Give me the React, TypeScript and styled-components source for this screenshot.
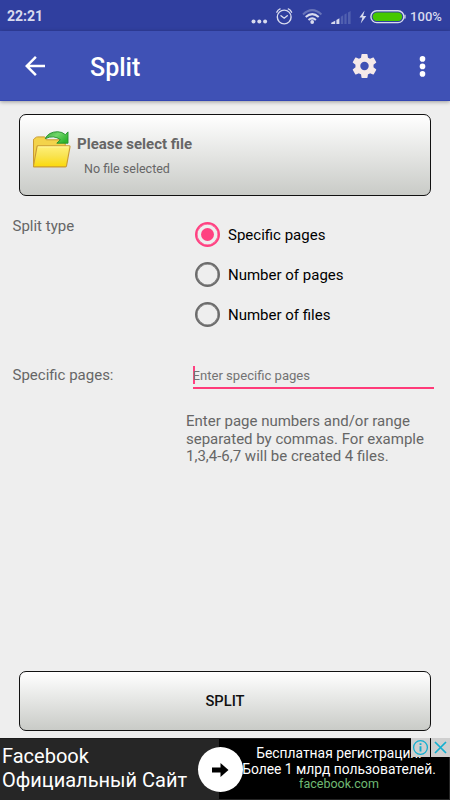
import React, { useState } from "react";
import styled, { createGlobalStyle } from "styled-components";

const GlobalStyle = createGlobalStyle`
  * { box-sizing: border-box; }
  body { margin: 0; background: #eeeeee; font-family: Roboto, "Noto Sans", sans-serif; }
  button, input { font: inherit; }
`;

const Screen = styled.div`
  width: 450px;
  height: 800px;
  display: flex;
  flex-direction: column;
  overflow: hidden;
  background: #eeeeee;
  color: #666666;
`;

const StatusBar = styled.div`
  flex: none;
  height: 31px;
  display: flex;
  align-items: center;
  justify-content: space-between;
  padding: 1px 8px 0 7px;
  background: #303f9f;
  color: #d8dbee;
`;

const Clock = styled.span`
  font-size: 14px;
  font-weight: 700;
  line-height: 20px;
`;

const StatusIcons = styled.div`
  display: flex;
  align-items: center;
`;

const StatusGlyphs = styled.svg`
  display: block;
  margin: 0 4px 1px 0;
`;

const Percent = styled.span`
  font-size: 13px;
  font-weight: 500;
  letter-spacing: 0.05px;
`;

const Toolbar = styled.header`
  flex: none;
  height: 70px;
  display: flex;
  align-items: center;
  padding: 0 13px 0 20px;
  background: #3f51b5;
  border-bottom: 1px solid #3346b2;
  box-shadow: 0 1px 4px rgba(0, 0, 0, 0.35);
  color: #ffffff;
`;

const Title = styled.h1`
  flex: 1;
  margin: 5px 0 0 40px;
  font-size: 25px;
  font-weight: 500;
  line-height: 30px;
`;

const IconButton = styled.button<{ $gap?: number }>`
  display: flex;
  padding: 0;
  margin: 0 0 0 ${(p) => p.$gap ?? 0}px;
  border: 0;
  background: none;
`;

const Content = styled.main`
  flex: 1;
  display: flex;
  flex-direction: column;
  padding: 13px 17px 7px 12px;
`;

const GradientButton = styled.button<{ $height: number }>`
  flex: none;
  width: 412px;
  height: ${(p) => p.$height}px;
  margin: 0 0 0 7px;
  padding: 0;
  border: 1px solid #111111;
  border-radius: 7px;
  background: linear-gradient(#ffffff, #c9cbc7);
`;

const FileButton = styled(GradientButton)`
  display: flex;
  align-items: flex-start;
  padding: 16px 0 0 11px;
  text-align: left;
  color: #666666;
`;

const FileText = styled.span`
  display: flex;
  flex-direction: column;
  margin: 3px 0 0 4px;
`;

const FileTitle = styled.span`
  font-size: 15px;
  font-weight: 700;
  line-height: 20px;
`;

const FileName = styled.span`
  margin: 6px 0 0 7px;
  font-size: 12.5px;
  line-height: 18px;
`;

const SplitButton = styled(GradientButton)`
  margin-top: auto;
  color: #111111;
  font-size: 14.7px;
  font-weight: 500;
`;

const FormRow = styled.section<{ $top: number }>`
  display: grid;
  grid-template-columns: 173.5px 1fr;
  margin-top: ${(p) => p.$top}px;
`;

const Label = styled.span<{ $drop?: number }>`
  padding: ${(p) => p.$drop ?? 0}px 0 0 0.5px;
  font-size: 15px;
  line-height: 20px;
`;

const RadioGroup = styled.div`
  display: flex;
  flex-direction: column;
  padding: 0 0 0 9.5px;
`;

const RadioOption = styled.button`
  display: flex;
  align-items: center;
  gap: 8px;
  height: 40px;
  padding: 0;
  border: 0;
  background: none;
  color: #000000;
  font-size: 15px;
`;

const RadioMark = styled.span<{ $on: boolean }>`
  display: flex;
  align-items: center;
  justify-content: center;
  width: 25px;
  height: 25px;
  margin-bottom: 1px;
  border: 2px solid ${(p) => (p.$on ? "#ff4081" : "#6b6b6b")};
  box-shadow: inset 0 0 0 0.5px ${(p) => (p.$on ? "#ff4081" : "#6b6b6b")};
  border-radius: 50%;

  &::after {
    content: "";
    width: 13px;
    height: 13px;
    border-radius: 50%;
    background: ${(p) => (p.$on ? "#ff4081" : "transparent")};
  }
`;

const Field = styled.div`
  width: 241px;
  height: 24px;
  margin: 0 0 0 7px;
  display: flex;
  align-items: flex-start;
  border-bottom: 2px solid #ff3a79;
`;

const Caret = styled.span`
  width: 2px;
  height: 18px;
  margin: 1px -2px 0 0;
  background: #ff4081;
`;

const FieldInput = styled.input`
  flex: 1;
  width: 100%;
  height: 20px;
  padding: 0;
  border: 0;
  outline: 0;
  background: none;
  color: #333333;
  font-size: 13.1px;

  &::placeholder { color: #737373; opacity: 1; }
`;

const Hint = styled.p`
  width: 250px;
  margin: 24px 0 0;
  padding-left: 0.5px;
  font-size: 15px;
  line-height: 17.5px;
  white-space: pre-line;
`;

const AdBanner = styled.aside`
  flex: none;
  position: relative;
  height: 62px;
  display: grid;
  grid-template-columns: 219px 230px 1px;
  border-top: 1px solid #1c1c1c;
  background: #262626;
  color: #ffffff;
`;

const AdHeadline = styled.div`
  padding: 6px 0 0 2px;
  font-size: 20px;
  line-height: 23.5px;
  white-space: pre-line;
`;

const AdBody = styled.div`
  display: flex;
  flex-direction: column;
  align-items: center;
  margin-bottom: 1px;
  padding: 6px 0 0 10px;
  background: #000000;
  font-size: 13.85px;
  line-height: 16px;
  white-space: nowrap;
`;

const AdLink = styled.span`
  color: #6fb973;
  font-size: 12.5px;
  line-height: 14px;
`;

const AdArrow = styled.span`
  position: absolute;
  top: 8px;
  left: 198px;
  width: 45px;
  height: 45px;
  display: flex;
  align-items: center;
  justify-content: center;
  border-radius: 50%;
  background: #ffffff;
`;

const AdControls = styled.div`
  position: absolute;
  top: -1px;
  right: 0;
  display: flex;
  gap: 1px;
`;

const AdControl = styled.button`
  width: 19px;
  height: 19px;
  display: flex;
  align-items: center;
  justify-content: center;
  padding: 0;
  border: 0;
  background: #cfcfcf;
`;

const StatusDrawing = () => (
  <StatusGlyphs width="156" height="20" viewBox="0 0 156 20" fill="none">
    <g fill="#d8dbee">
      <circle cx="3.5" cy="15.5" r="2" />
      <circle cx="9.3" cy="15.5" r="2" />
      <circle cx="15.1" cy="15.5" r="2" />
    </g>
    <g stroke="#d8dbee" strokeWidth="1.4" strokeLinecap="round">
      <circle cx="34.2" cy="11" r="6.9" />
      <path d="M31 9.7l3.2 2.5 3.1-2.5M26.8 6.2q1-2.5 3.3-3.3M41.6 6.2q-1-2.5-3.3-3.3" />
    </g>
    <path d="M53 8.4q9.2-8.6 18.4 0" stroke="#6874b9" strokeWidth="2" />
    <path d="M55.7 11q6.5-5.8 13 0M58.5 14q3.7-3.2 7.4 0" stroke="#d8dbee" strokeWidth="2" />
    <circle cx="62.2" cy="16" r="1.9" fill="#d8dbee" />
    <path d="M81.2 18v-1.2l4-2V18zM86.4 18v-4l3-1.8V18z" fill="#d8dbee" />
    <path d="M90.8 18v-7.3l2.4-1.5V18zM94.4 18V8.5l2.2-1.3V18zM98 18V6.4l2.6-1.5V18z" fill="#5160b0" />
    <path d="M114.6 4.5l-5.2 7h3l-1.7 6 5.6-7.6h-3.2z" fill="#d8dbee" />
    <rect x="120.9" y="4.8" width="33" height="11.8" rx="5.9" stroke="#d8dbee" strokeWidth="1.4" />
    <rect x="122.6" y="6.5" width="29.6" height="8.4" rx="4.2" fill="#46c800" />
    <path d="M155 8.8v3.8" stroke="#d8dbee" strokeWidth="1.2" />
  </StatusGlyphs>
);

const BackIcon = () => (
  <svg width="30" height="30" viewBox="0 0 24 24" fill="#ffffff">
    <path d="M20 11H7.83l5.59-5.59L12 4l-8 8 8 8 1.41-1.41L7.83 13H20v-2z" />
  </svg>
);

const GearIcon = () => (
  <svg width="29" height="30" viewBox="0 0 24 24" fill="#f5e9e9">
    <path d="M19.43 12.98c.04-.32.07-.64.07-.98s-.03-.66-.07-.98l2.11-1.65c.19-.15.24-.42.12-.64l-2-3.46c-.12-.22-.39-.3-.61-.22l-2.49 1c-.52-.4-1.08-.73-1.69-.98l-.38-2.65A.49.49 0 0 0 14 2h-4c-.25 0-.46.18-.49.42l-.38 2.65c-.61.25-1.17.59-1.69.98l-2.49-1c-.23-.09-.49 0-.61.22l-2 3.46c-.13.22-.07.49.12.64l2.11 1.65c-.04.32-.07.65-.07.98s.03.66.07.98l-2.11 1.65c-.19.15-.24.42-.12.64l2 3.46c.12.22.39.3.61.22l2.49-1c.52.4 1.08.73 1.69.98l.38 2.65c.03.24.24.42.49.42h4c.25 0 .46-.18.49-.42l.38-2.65c.61-.25 1.17-.59 1.69-.98l2.49 1c.23.09.49 0 .61-.22l2-3.46c.12-.22.07-.49-.12-.64l-2.11-1.65zM12 15.5a3.5 3.5 0 1 1 0-7 3.5 3.5 0 0 1 0 7z" />
  </svg>
);

const MoreIcon = () => (
  <svg width="28" height="30" viewBox="0 0 28 30" fill="#ffffff">
    <circle cx="13.5" cy="7.9" r="2.8" />
    <circle cx="13.5" cy="15.4" r="2.8" />
    <circle cx="13.5" cy="22.9" r="2.8" />
  </svg>
);

const FolderIcon = () => (
  <svg width="42" height="42" viewBox="0 0 42 42">
    <defs>
      <linearGradient id="front" x1="0" y1="0" x2="0" y2="1">
        <stop offset="0" stopColor="#fff07a" />
        <stop offset="0.45" stopColor="#f9e454" />
        <stop offset="1" stopColor="#fbd909" />
      </linearGradient>
      <linearGradient id="arrow" x1="0" y1="0" x2="1" y2="0.6">
        <stop offset="0" stopColor="#35a836" />
        <stop offset="0.5" stopColor="#72d66b" />
        <stop offset="1" stopColor="#2fb52f" />
      </linearGradient>
    </defs>
    <path d="M2.5 35.2V9.1q0-1.1.9-1.6l1.6-1q.5-.6 1.4-.6h6.8q1 0 1.4.9l.7 2H33q1.2 0 1.2 1.2V35H3.8z" fill="#f3d34b" stroke="#c99b31" strokeWidth="1" />
    <path d="M14.3 7.6Q17.4.9 26.6.7q4.6.1 7.8 3L37 .9v11.3H25.8l3.6-3.5q-6.6-5.1-15.1-1.1z" fill="url(#arrow)" stroke="#218e2b" strokeWidth="0.9" strokeLinejoin="round" />
    <path d="M6 15.6q.1-.8.9-.8h31.3q1 0 .8 1l-3.5 19.1q-.2 1-1.1 1H3.3q-1 0-.8-1.1z" fill="url(#front)" stroke="#ca9a35" strokeWidth="1.1" />
    <path d="M7.1 16h30.5" stroke="#fff5a3" strokeWidth="0.8" />
  </svg>
);

const SPLIT_TYPES = ["Specific pages", "Number of pages", "Number of files"];

export default function App() {
  const [splitType, setSplitType] = useState(0);
  const [pages, setPages] = useState("");

  return (
    <>
      <GlobalStyle />
      <Screen>
        <StatusBar>
          <Clock>22:21</Clock>
          <StatusIcons>
            <StatusDrawing />
            <Percent>100%</Percent>
          </StatusIcons>
        </StatusBar>

        <Toolbar>
          <IconButton aria-label="Back"><BackIcon /></IconButton>
          <Title>Split</Title>
          <IconButton aria-label="Settings"><GearIcon /></IconButton>
          <IconButton aria-label="More options" $gap={30}><MoreIcon /></IconButton>
        </Toolbar>

        <Content>
          <FileButton $height={82}>
            <FolderIcon />
            <FileText>
              <FileTitle>Please select file</FileTitle>
              <FileName>No file selected</FileName>
            </FileText>
          </FileButton>

          <FormRow $top={19}>
            <Label $drop={1}>Split type</Label>
            <RadioGroup role="radiogroup">
              {SPLIT_TYPES.map((name, i) => (
                <RadioOption key={name} role="radio" aria-checked={i === splitType} onClick={() => setSplitType(i)}>
                  <RadioMark $on={i === splitType} />
                  {name}
                </RadioOption>
              ))}
            </RadioGroup>
          </FormRow>

          <FormRow $top={30}>
            <Label>Specific pages:</Label>
            <div>
              <Field>
                <Caret />
                <FieldInput placeholder="Enter specific pages" value={pages} onChange={(e) => setPages(e.target.value)} />
              </Field>
              <Hint>
                {"Enter page numbers and/or range\nseparated by commas. For example\n1,3,4-6,7 will be created 4 files."}
              </Hint>
            </div>
          </FormRow>

          <SplitButton $height={60}>SPLIT</SplitButton>
        </Content>

        <AdBanner>
          <AdHeadline>{"Facebook\nОфициальный Сайт"}</AdHeadline>
          <AdBody>
            <span>Бесплатная регистрация.</span>
            <span>Более 1 млрд пользователей.</span>
            <AdLink>facebook.com</AdLink>
          </AdBody>
          <AdArrow>
            <svg width="17" height="14" viewBox="0 0 17 14">
              <path d="M0 4.6h8.5V0L16.5 7l-8 7V9.4H0z" fill="#000000" />
            </svg>
          </AdArrow>
          <AdControls>
            <AdControl aria-label="Ad information">
              <svg width="17" height="17" viewBox="0 0 17 17" fill="none" stroke="#12afd0">
                <circle cx="8.5" cy="8.5" r="6.9" strokeWidth="1.3" />
                <path d="M8.5 7.3v5.2M8.5 4.2v1.9" strokeWidth="1.9" />
              </svg>
            </AdControl>
            <AdControl aria-label="Close ad">
              <svg width="15" height="15" viewBox="0 0 15 15" fill="none" stroke="#12afd0" strokeWidth="1.7">
                <path d="M2 2l11 11M13 2L2 13" />
              </svg>
            </AdControl>
          </AdControls>
        </AdBanner>
      </Screen>
    </>
  );
}
